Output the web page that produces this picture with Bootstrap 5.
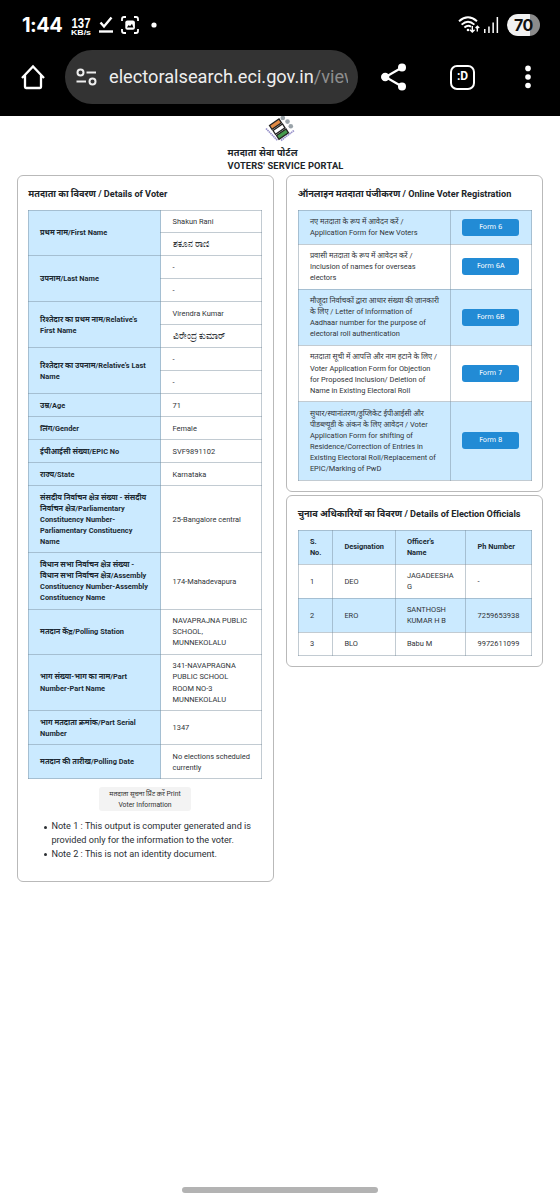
<!DOCTYPE html>
<html lang="hi">
<head>
<meta charset="utf-8">
<meta name="viewport" content="width=device-width, initial-scale=1">
<title>Voters' Service Portal</title>
<link href="https://cdn.jsdelivr.net/npm/bootstrap@5.3.0/dist/css/bootstrap.min.css" rel="stylesheet">
<style>
body{font-family:Roboto,"Noto Sans","Liberation Sans",sans-serif;background:#fff;color:#212529;min-height:1200px;overflow-x:hidden}
.phone-top{height:116px;background:#000;color:#fff}
.status{height:50px;padding:0 20px 0 22px}
.clock{font:700 20px/50px Inter,sans-serif;letter-spacing:-.5px;width:49px}
.speed{width:20px;text-align:center}
.speed svg{display:block}
.note-dot{margin-left:12px}
.battery{width:33px;height:22px;border-radius:11px;background:linear-gradient(90deg,#f2f2f2 70%,#8b8b8b 70%);color:#111;font:700 16px/22px Inter,sans-serif;letter-spacing:-.4px}
.toolbar{height:54px;padding-left:20px}
.address{width:293px;height:54px;border-radius:27px;background:#333;margin-left:19px;padding-left:11px}
.address .url{font-size:18.2px;line-height:54px;white-space:nowrap;width:239px;overflow:hidden;margin-left:12px;color:#eee}
.address .path{color:#8e8e8e}
.tabs-count{width:25px;height:25px;border:2.6px solid #fff;border-radius:7px;font:700 12px/19px Roboto,sans-serif;margin-left:43px}
.share-icon{margin-left:23px}
.more-icon{margin-left:50px}
.portal-head{height:59px;padding-left:227.5px;font-weight:700;font-size:9.3px;line-height:13.5px;letter-spacing:.16px}
.portal-head svg{margin-left:36px;display:block}
.portal-head .hindi{padding-top:1.5px;line-height:13.5px}
.cols{padding:0 16.5px;gap:11.5px}
.panel{width:257.7px;border:1px solid #b9b9b9;border-radius:6px;padding:10.5px 11px 0}
.voter{height:707px;padding-left:10.4px}
.forms{height:317px}
.officials{height:172px}
.panel h2{font-size:9.15px;line-height:14px;font-weight:700;margin:0 0 9px;white-space:nowrap}
.officials h2{padding-top:.5px;margin-bottom:8.5px}
.voter h2{padding-left:.4px}
.grid-table{width:234.5px;table-layout:fixed;border-collapse:collapse;font-size:7.45px;line-height:11.1px;margin:0;color:#303438;white-space:nowrap}
.grid-table td,.grid-table th{border:1px solid rgba(120,140,155,.45);padding:5.45px 11.2px;vertical-align:middle;text-align:left}
.grid-table th{font-weight:700;color:#202a33;font-size:7.4px}
.grid-table th,.tint td{background:#cbeaff}
.grid-table .kannada{font-size:8.6px}
.form-btn{display:block;width:57px;height:17px;padding:0;border:0;border-radius:3px;background:#228bd5;color:#fff;font:6.8px/17px "DejaVu Sans",sans-serif;letter-spacing:-.1px}
.print-btn{display:block;width:91.5px;height:24px;margin:8px auto 0;padding:2px 0;border:0;border-radius:3px;background:#f3f3f3;color:#303030;font-size:6.8px;line-height:10.3px;white-space:nowrap}
.notes{font-size:9.15px;line-height:13.75px;padding:0 0 0 23.5px;margin:9px 0 0;white-space:nowrap;color:#2b2f33;list-style:none}
.notes li::before{content:"";float:left;width:3px;height:3px;border-radius:50%;background:#2b2f33;margin:5.5px 0 0 -7.5px}
.home-pill{position:fixed;left:182px;bottom:7px;width:196px;height:6px;border-radius:3px;background:#b3b3b3}
</style>
</head>
<body>
<header class="phone-top">
<div class="status d-flex align-items-center">
<div class="clock">1:44</div>
<div class="speed"><svg width="20" height="30" viewBox="0 0 20 30" fill="#fff" font-family="Liberation Sans" font-weight="700"><text x=".5" y="17.500" font-size="15.500" textLength="19" lengthAdjust="spacingAndGlyphs">137</text><text x="0" y="25.300" font-size="7.600" textLength="20" lengthAdjust="spacingAndGlyphs">KB/s</text></svg></div>
<svg class="ms-2" width="14" height="18" viewBox="0 0 14 18"><path d="M1.500 6.500 5 10.500 12.500 1.500" fill="none" stroke="#fff" stroke-width="2.400"/><path d="M0 15.500h14" stroke="#fff" stroke-width="2.400"/></svg>
<svg class="ms-2" width="18" height="18" viewBox="0 0 18 18"><path d="M1 5V3q0-2 2-2h2M13 1h2q2 0 2 2v2M17 13v2q0 2-2 2h-2M5 17H3q-2 0-2-2v-2" fill="none" stroke="#fff" stroke-width="1.800"/><rect x="4.300" y="4.500" width="9.600" height="9.200" rx="2" fill="#fff"/><path d="m5.800 11.500 2-2.500 1.200 1.200 2-2.500 1.400 3.800z" fill="#000"/></svg>
<svg class="note-dot me-auto" width="6" height="6"><circle cx="3" cy="3" r="2.600" fill="#fff"/></svg>
<svg width="22" height="18" viewBox="0 0 22 18"><g fill="none" stroke="#fff" stroke-width="1.900"><path d="M1 5.200Q10 -2.500 19 5.200M3.600 8.600Q10 3 16.400 8.600M6.400 11.500Q10 8.300 13 10.800"/><path d="M14.300 10v6M12 13.800l2.300 2.300 2.300-2.300M19.300 15.500v-5M17.600 12l1.800-1.800 1.800 1.800" stroke-width="1.400"/></g><circle cx="10" cy="14" r="1.300" fill="#fff"/></svg>
<svg class="ms-1 me-2" width="15" height="16" viewBox="0 0 15 16" fill="#fff"><path d="M0 12h1.500v4H0zM4.200 9.500h1.500V16H4.200zM8.400 5.500h1.500V16H8.400zM12.600 0h1.500v16h-1.500z"/></svg>
<div class="battery text-center">70</div>
</div>
<div class="toolbar d-flex align-items-center">
<svg width="26" height="26" viewBox="0 0 26 26"><path d="M2 14 13 2.500 24 14M5 11.500V23q0 1 1 1h14q1 0 1-1V11.500" fill="none" stroke="#fff" stroke-width="2.300"/></svg>
<div class="address d-flex align-items-center">
<svg width="21" height="18" viewBox="0 0 21 18" fill="none" stroke="#eee" stroke-width="2"><circle cx="4.500" cy="4.500" r="3"/><path d="M10.500 4.500H20M.5 13.500H10"/><circle cx="16.500" cy="13.500" r="3"/></svg>
<div class="url">electoralsearch.eci.gov.in<span class="path">/view</span></div>
</div>
<svg class="share-icon" width="26" height="28" viewBox="0 0 26 28"><path d="M21 4.500 4.500 14 21 23.500" fill="none" stroke="#fff" stroke-width="2.200"/><g fill="#fff"><circle cx="21" cy="4.500" r="4"/><circle cx="4.200" cy="14" r="4.200"/><circle cx="21" cy="23.500" r="4"/></g></svg>
<div class="tabs-count text-center">:D</div>
<svg class="more-icon" width="6" height="24" viewBox="0 0 6 24" fill="#fff"><circle cx="3" cy="3.400" r="2.800"/><circle cx="3" cy="12" r="2.800"/><circle cx="3" cy="20.500" r="2.800"/></svg>
</div>
</header>
<div class="portal-head">
<svg width="32" height="28" viewBox="0 0 32 28"><g stroke="#222" stroke-width="1.300"><path d="m5.500 9.500 9.500-6.500 2.500 3.800-9.500 6.500z" fill="#e08a45"/><path d="m9 14.500 9.500-6.500 2.500 3.800-9.500 6.500z" fill="#fff"/><path d="m12.500 19.500 9.500-6.500 2.500 3.800-9.500 6.500z" fill="#459a4c"/></g><g fill="#9aa3a9"><circle cx="18.800" cy="2" r="2.300"/><circle cx="23.500" cy="5.600" r="2.300"/><circle cx="26.800" cy="10.300" r="2.300"/></g><path d="m2 12.500 11.500 12M17 24.500 30 14.500" fill="none" stroke="#9a94cb" stroke-width="1.700" stroke-dasharray="1.600 .5"/></svg>
<div class="hindi">मतदाता सेवा पोर्टल</div><div>VOTERS' SERVICE PORTAL</div>
</div>
<main class="cols d-flex align-items-start">
<section class="panel voter">
<h2>मतदाता का विवरण / Details of Voter</h2>
<table class="grid-table"><colgroup><col style="width:132.5px"><col></colgroup>
<tr><th rowspan="2">प्रथम नाम/First Name</th><td>Shakun Rani</td></tr><tr><td class="kannada">ಶಕೂನ ರಾಣಿ</td></tr>
<tr><th rowspan="2">उपनाम/Last Name</th><td>-</td></tr><tr><td>-</td></tr>
<tr><th rowspan="2">रिश्तेदार का प्रथम नाम/Relative's<br>First Name</th><td>Virendra Kumar</td></tr><tr><td class="kannada">ವಿರೇಂದ್ರ ಕುಮಾರ್</td></tr>
<tr><th rowspan="2">रिश्तेदार का उपनाम/Relative's Last<br>Name</th><td>-</td></tr><tr><td>-</td></tr>
<tr><th>उम्र/Age</th><td>71</td></tr>
<tr><th>लिंग/Gender</th><td>Female</td></tr>
<tr><th>ईपीआईसी संख्या/EPIC No</th><td>SVF9891102</td></tr>
<tr><th>राज्य/State</th><td>Karnataka</td></tr>
<tr><th>संसदीय निर्वाचन क्षेत्र संख्या - संसदीय<br>निर्वाचन क्षेत्र/Parliamentary<br>Constituency Number-<br>Parliamentary Constituency<br>Name</th><td>25-Bangalore central</td></tr>
<tr><th>विधान सभा निर्वाचन क्षेत्र संख्या -<br>विधान सभा निर्वाचन क्षेत्र/Assembly<br>Constituency Number-Assembly<br>Constituency Name</th><td>174-Mahadevapura</td></tr>
<tr><th>मतदान केंद्र/Polling Station</th><td>NAVAPRAJNA PUBLIC<br>SCHOOL,<br>MUNNEKOLALU</td></tr>
<tr><th>भाग संख्या-भाग का नाम/Part<br>Number-Part Name</th><td>341-NAVAPRAGNA<br>PUBLIC SCHOOL<br>ROOM NO-3<br>MUNNEKOLALU</td></tr>
<tr><th>भाग मतदाता क्रमांक/Part Serial<br>Number</th><td>1347</td></tr>
<tr><th>मतदान की तारीख/Polling Date</th><td>No elections scheduled<br>currently</td></tr>
</table>
<button class="print-btn">मतदाता सूचना प्रिंट करें Print<br>Voter Information</button>
<ul class="notes"><li>Note 1 : This output is computer generated and is<br>provided only for the information to the voter.</li><li>Note 2 : This is not an identity document.</li></ul>
</section>
<div class="d-flex flex-column" style="gap:3px">
<section class="panel forms">
<h2>ऑनलाइन मतदाता पंजीकरण / Online Voter Registration</h2>
<table class="grid-table"><colgroup><col style="width:152.4px"><col></colgroup>
<tr class="tint"><td>नए मतदाता के रूप में आवेदन करें /<br>Application Form for New Voters</td><td><button class="form-btn">Form 6</button></td></tr>
<tr><td>प्रवासी मतदाता के रूप में आवेदन करें /<br>Inclusion of names for overseas<br>electors</td><td><button class="form-btn">Form 6A</button></td></tr>
<tr class="tint"><td>मौजूदा निर्वाचकों द्वारा आधार संख्या की जानकारी<br>के लिए / Letter of Information of<br>Aadhaar number for the purpose of<br>electoral roll authentication</td><td><button class="form-btn">Form 6B</button></td></tr>
<tr><td>मतदाता सूची में आपत्ति और नाम हटाने के लिए /<br>Voter Application Form for Objection<br>for Proposed Inclusion/ Deletion of<br>Name in Existing Electoral Roll</td><td><button class="form-btn">Form 7</button></td></tr>
<tr class="tint"><td>सुधार/स्थानांतरण/डुप्लिकेट ईपीआईसी और<br>पीडब्ल्यूडी के अंकन के लिए आवेदन / Voter<br>Application Form for shifting of<br>Residence/Correction of Entries in<br>Existing Electoral Roll/Replacement of<br>EPIC/Marking of PwD</td><td><button class="form-btn">Form 8</button></td></tr>
</table>
</section>
<section class="panel officials">
<h2>चुनाव अधिकारियों का विवरण / Details of Election Officials</h2>
<table class="grid-table"><colgroup><col style="width:34.5px"><col style="width:62.5px"><col style="width:70.7px"><col></colgroup>
<tr><th>S.<br>No.</th><th>Designation</th><th>Officer's<br>Name</th><th>Ph Number</th></tr>
<tr><td>1</td><td>DEO</td><td>JAGADEESHA<br>G</td><td>-</td></tr>
<tr class="tint"><td>2</td><td>ERO</td><td>SANTHOSH<br>KUMAR H B</td><td>7259653938</td></tr>
<tr><td>3</td><td>BLO</td><td>Babu M</td><td>9972611099</td></tr>
</table>
</section>
</div>
</main>
<div class="home-pill"></div>
<script src="https://cdn.jsdelivr.net/npm/bootstrap@5.3.0/dist/js/bootstrap.bundle.min.js"></script>
</body>
</html>
